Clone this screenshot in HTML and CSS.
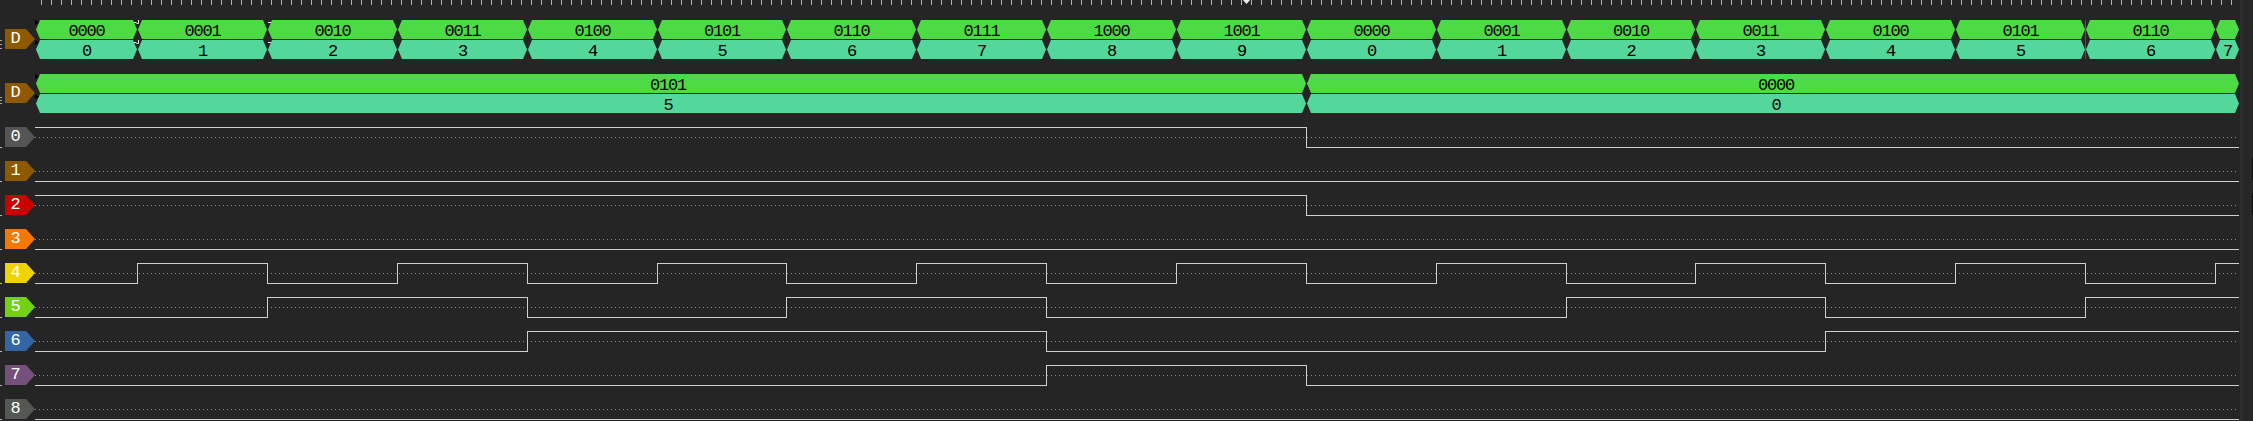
FILE: index.html
```html
<!DOCTYPE html>
<html>
<head>
<meta charset="utf-8">
<link rel="stylesheet" href="styles.css">
</head>
<body>
<div class="screen">
  <div class="main">
    <div class="ruler">
      <svg width="2239" height="20" viewBox="0 0 2239 20">
        <defs>
          <pattern id="tk" x="41" y="0" width="10" height="20" patternUnits="userSpaceOnUse">
            <rect x="0" y="0" width="1" height="5" class="tick"/>
          </pattern>
        </defs>
        <rect x="41" y="0" width="2198" height="5" fill="url(#tk)"/>
        <polygon points="1243,0 1250,0 1246.5,4" class="cur"/>
      </svg>
    </div>

    <div class="row bus1">
      <div class="hdr"><div class="mk mk-b1"></div><div class="lbl c-d">D</div></div>
      <svg class="trace" width="2204" height="54" viewBox="35 0 2204 54">
        <defs>
          <g id="segA">
            <polygon points="36,9.5 40,0 133,0 137,9.5 133,19 40,19"/>
            <polygon points="138,9.5 142,0 263,0 267,9.5 263,19 142,19"/>
            <polygon points="268,9.5 272,0 393,0 397,9.5 393,19 272,19"/>
            <polygon points="398,9.5 402,0 523,0 527,9.5 523,19 402,19"/>
            <polygon points="528,9.5 532,0 653,0 657,9.5 653,19 532,19"/>
            <polygon points="658,9.5 662,0 782,0 786,9.5 782,19 662,19"/>
            <polygon points="787,9.5 791,0 912,0 916,9.5 912,19 791,19"/>
            <polygon points="917,9.5 921,0 1042,0 1046,9.5 1042,19 921,19"/>
            <polygon points="1047,9.5 1051,0 1172,0 1176,9.5 1172,19 1051,19"/>
            <polygon points="1177,9.5 1181,0 1302,0 1306,9.5 1302,19 1181,19"/>
            <polygon points="1307,9.5 1311,0 1432,0 1436,9.5 1432,19 1311,19"/>
            <polygon points="1437,9.5 1441,0 1562,0 1566,9.5 1562,19 1441,19"/>
            <polygon points="1567,9.5 1571,0 1691,0 1695,9.5 1691,19 1571,19"/>
            <polygon points="1696,9.5 1700,0 1821,0 1825,9.5 1821,19 1700,19"/>
            <polygon points="1826,9.5 1830,0 1951,0 1955,9.5 1951,19 1830,19"/>
            <polygon points="1956,9.5 1960,0 2081,0 2085,9.5 2081,19 1960,19"/>
            <polygon points="2086,9.5 2090,0 2211,0 2215,9.5 2211,19 2090,19"/>
            <polygon points="2216,9.5 2220,0 2235,0 2239,9.5 2235,19 2220,19"/>
          </g>
        </defs>
        <use href="#segA" class="bg-g"/>
        <use href="#segA" y="20" class="bg-t"/>
        <polygon points="35,0 39,2.5 35,5" class="edge"/>
        <polygon points="35,20 39,22.5 35,25" class="edge"/>
        <path d="M134 2.5h2.5M138.5 0v3.5h-2M134 22.5h2.5M138.5 20v3.5h-2M268 2.5h3M268 22.5h3" class="hint"/>
        <line x1="2085.5" y1="0" x2="2085.5" y2="39" class="hover"/>
        <g class="bt">
          <text x="86.5" y="16">0000</text>
          <text x="202.5" y="16">0001</text>
          <text x="332.5" y="16">0010</text>
          <text x="462.5" y="16">0011</text>
          <text x="592.5" y="16">0100</text>
          <text x="722" y="16">0101</text>
          <text x="851.5" y="16">0110</text>
          <text x="981.5" y="16">0111</text>
          <text x="1111.5" y="16">1000</text>
          <text x="1241.5" y="16">1001</text>
          <text x="1371.5" y="16">0000</text>
          <text x="1501.5" y="16">0001</text>
          <text x="1631" y="16">0010</text>
          <text x="1760.5" y="16">0011</text>
          <text x="1890.5" y="16">0100</text>
          <text x="2020.5" y="16">0101</text>
          <text x="2150.5" y="16">0110</text>
          <text x="86.5" y="36">0</text>
          <text x="202.5" y="36">1</text>
          <text x="332.5" y="36">2</text>
          <text x="462.5" y="36">3</text>
          <text x="592.5" y="36">4</text>
          <text x="722" y="36">5</text>
          <text x="851.5" y="36">6</text>
          <text x="981.5" y="36">7</text>
          <text x="1111.5" y="36">8</text>
          <text x="1241.5" y="36">9</text>
          <text x="1371.5" y="36">0</text>
          <text x="1501.5" y="36">1</text>
          <text x="1631" y="36">2</text>
          <text x="1760.5" y="36">3</text>
          <text x="1890.5" y="36">4</text>
          <text x="2020.5" y="36">5</text>
          <text x="2150.5" y="36">6</text>
          <text x="2227.5" y="36">7</text>
        </g>
      </svg>
    </div>

    <div class="row bus2">
      <div class="hdr"><div class="mk mk-b2"></div><div class="lbl c-d">D</div></div>
      <svg class="trace" width="2204" height="53" viewBox="35 0 2204 53">
        <defs>
          <g id="segB">
            <polygon points="36,9.5 40,0 1302,0 1306,9.5 1302,19 40,19"/>
            <polygon points="1307,9.5 1311,0 2235,0 2239,9.5 2235,19 1311,19"/>
          </g>
        </defs>
        <use href="#segB" class="bg-g"/>
        <use href="#segB" y="20" class="bg-t"/>
        <polygon points="35,0 39,2.5 35,5" class="edge"/>
        <polygon points="35,20 39,22.5 35,25" class="edge"/>
        <g class="bt">
          <text x="668" y="16">0101</text>
          <text x="1776" y="16">0000</text>
          <text x="668" y="36">5</text>
          <text x="1776" y="36">0</text>
        </g>
      </svg>
    </div>

    <div class="row dig">
      <div class="hdr"><div class="mk"></div><div class="lbl c-0">0</div></div>
      <svg class="trace" width="2204" height="34" viewBox="35 0 2204 34">
        <line x1="35" y1="10.5" x2="2239" y2="10.5" class="dot"/>
        <path d="M35 0.5H1306.5V20.5H2239" class="wave"/>
      </svg>
    </div>
    <div class="row dig">
      <div class="hdr"><div class="mk"></div><div class="lbl c-1">1</div></div>
      <svg class="trace" width="2204" height="34" viewBox="35 0 2204 34">
        <line x1="35" y1="10.5" x2="2239" y2="10.5" class="dot"/>
        <path d="M35 20.5H2239" class="wave"/>
      </svg>
    </div>
    <div class="row dig">
      <div class="hdr"><div class="mk"></div><div class="lbl c-2">2</div></div>
      <svg class="trace" width="2204" height="34" viewBox="35 0 2204 34">
        <line x1="35" y1="10.5" x2="2239" y2="10.5" class="dot"/>
        <path d="M35 0.5H1306.5V20.5H2239" class="wave"/>
      </svg>
    </div>
    <div class="row dig">
      <div class="hdr"><div class="mk"></div><div class="lbl c-3">3</div></div>
      <svg class="trace" width="2204" height="34" viewBox="35 0 2204 34">
        <line x1="35" y1="10.5" x2="2239" y2="10.5" class="dot"/>
        <path d="M35 20.5H2239" class="wave"/>
      </svg>
    </div>
    <div class="row dig">
      <div class="hdr"><div class="mk"></div><div class="lbl c-4">4</div></div>
      <svg class="trace" width="2204" height="34" viewBox="35 0 2204 34">
        <line x1="35" y1="10.5" x2="2239" y2="10.5" class="dot"/>
        <path d="M35 20.5H137.5V0.5H267.5V20.5H397.5V0.5H527.5V20.5H657.5V0.5H786.5V20.5H916.5V0.5H1046.5V20.5H1176.5V0.5H1306.5V20.5H1436.5V0.5H1566.5V20.5H1695.5V0.5H1825.5V20.5H1955.5V0.5H2085.5V20.5H2215.5V0.5H2239" class="wave"/>
      </svg>
    </div>
    <div class="row dig">
      <div class="hdr"><div class="mk"></div><div class="lbl c-5">5</div></div>
      <svg class="trace" width="2204" height="34" viewBox="35 0 2204 34">
        <line x1="35" y1="10.5" x2="2239" y2="10.5" class="dot"/>
        <path d="M35 20.5H267.5V0.5H527.5V20.5H786.5V0.5H1046.5V20.5H1566.5V0.5H1825.5V20.5H2085.5V0.5H2239" class="wave"/>
      </svg>
    </div>
    <div class="row dig">
      <div class="hdr"><div class="mk"></div><div class="lbl c-6">6</div></div>
      <svg class="trace" width="2204" height="34" viewBox="35 0 2204 34">
        <line x1="35" y1="10.5" x2="2239" y2="10.5" class="dot"/>
        <path d="M35 20.5H527.5V0.5H1046.5V20.5H1825.5V0.5H2239" class="wave"/>
      </svg>
    </div>
    <div class="row dig">
      <div class="hdr"><div class="mk"></div><div class="lbl c-7">7</div></div>
      <svg class="trace" width="2204" height="34" viewBox="35 0 2204 34">
        <line x1="35" y1="10.5" x2="2239" y2="10.5" class="dot"/>
        <path d="M35 20.5H1046.5V0.5H1306.5V20.5H2239" class="wave"/>
      </svg>
    </div>
    <div class="row dig">
      <div class="hdr"><div class="mk"></div><div class="lbl c-8">8</div></div>
      <svg class="trace" width="2204" height="34" viewBox="35 0 2204 34">
        <line x1="35" y1="10.5" x2="2239" y2="10.5" class="dot"/>
        <path d="M35 20.5H2239" class="wave"/>
      </svg>
    </div>
  </div>

  <div class="vscroll">
    <div class="vs-gap"></div>
    <div class="vs-line"></div>
    <div class="vs-fill"></div>
    <div class="vs-edge"><div class="vs-knob k1"></div><div class="vs-knob k2"></div></div>
  </div>
</div>
</body>
</html>
```

FILE: styles.css
```css
html, body {
  margin: 0;
  padding: 0;
  background: #252525;
  overflow: hidden;
}

.screen {
  display: flex;
  width: 2253px;
  height: 421px;
  overflow: hidden;
  background: #252525;
}

.main {
  width: 2239px;
  flex: none;
  display: flex;
  flex-direction: column;
}

.ruler {
  height: 20px;
  flex: none;
}
.ruler svg { display: block; }
.tick { fill: #b4b4b4; }
.cur { fill: #f0f0f0; }

.row {
  display: flex;
  flex: none;
}
.bus1 { height: 54px; }
.bus2 { height: 53px; }
.dig { height: 34px; }

.hdr {
  width: 35px;
  flex: none;
  display: flex;
  align-items: flex-start;
}

.mk {
  width: 2px;
  height: 1px;
  margin-top: 20px;
  margin-right: 3px;
  flex: none;
  background: #bdbdbd;
}
.mk-b1 {
  margin-top: 20px;
  height: 9px;
  background: repeating-linear-gradient(#a8a8a8 0 1px, transparent 1px 4px);
}
.mk-b2 {
  margin-top: 23px;
  height: 7px;
  background: repeating-linear-gradient(#a8a8a8 0 1px, transparent 1px 3px);
}

.lbl {
  width: 30px;
  height: 20px;
  flex: none;
  box-sizing: border-box;
  padding-right: 9px;
  display: flex;
  align-items: center;
  justify-content: center;
  clip-path: polygon(0 0, 21px 0, 30px 10px, 21px 20px, 0 20px);
  color: #ffffff;
  font-family: "Liberation Mono", "DejaVu Sans Mono", monospace;
  font-size: 17px;
  line-height: 20px;
}
.bus1 .lbl, .bus2 .lbl { margin-top: 9px; }

.c-d { background: #8f5902; }
.c-0 { background: #555555; }
.c-1 { background: #8f5902; }
.c-2 { background: #cc0000; }
.c-3 { background: #f57900; }
.c-4 { background: #edd400; }
.c-5 { background: #73d216; }
.c-6 { background: #3465a4; }
.c-7 { background: #75507b; }
.c-8 { background: #555753; }

.trace {
  display: block;
  flex: none;
  width: 2204px;
  overflow: hidden;
}

.bg-g { fill: #4cdb44; }
.bg-t { fill: #53d79b; }
.edge { fill: #000000; }
.hint { fill: none; stroke: #e6e6e6; stroke-width: 1; }
.hover { stroke: #2d6e3e; stroke-width: 1; }

.bt text {
  font-family: "Liberation Mono", "DejaVu Sans Mono", monospace;
  font-size: 17px;
  letter-spacing: -1.2px;
  fill: #000000;
  text-anchor: middle;
}

.dot {
  stroke: #8a8a8a;
  stroke-width: 1;
  stroke-dasharray: 1 3;
}
.wave {
  fill: none;
  stroke: #d0d0d0;
  stroke-width: 1;
  shape-rendering: crispEdges;
}

.vscroll {
  width: 14px;
  flex: none;
  display: flex;
}
.vs-gap { width: 1px; flex: none; }
.vs-line { width: 3px; flex: none; background: #2e2e2e; }
.vs-fill { flex: 1; background: #272727; }
.vs-edge {
  width: 1px;
  flex: none;
  display: flex;
  flex-direction: column;
}
.vs-knob { background: #0e0e0e; flex: none; }
.k1 { margin-top: 158px; height: 22px; }
.k2 { margin-top: 13px; height: 22px; }
```
